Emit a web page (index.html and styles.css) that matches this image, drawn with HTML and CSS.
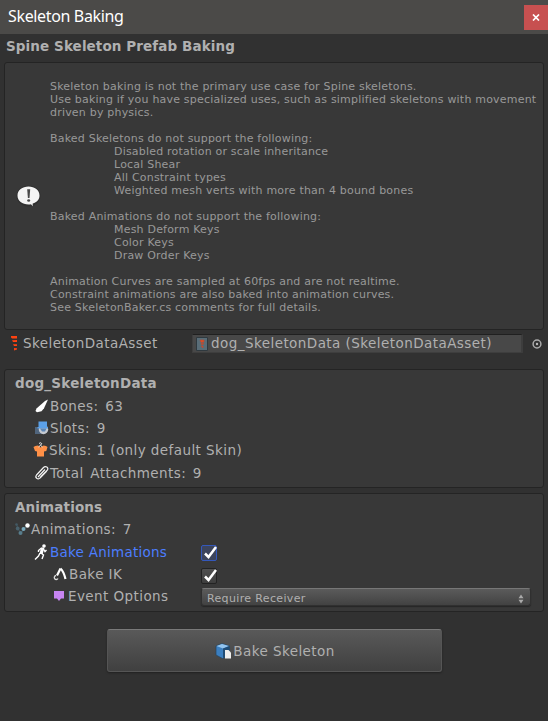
FILE: index.html
```html
<!DOCTYPE html>
<html lang="en">
<head>
<meta charset="utf-8">
<title>Skeleton Baking</title>
<link rel="stylesheet" href="styles.css">
</head>
<body>
<header class="titlebar">
  <span class="title">Skeleton Baking</span>
  <button class="close" aria-label="Close"><svg width="8" height="7" viewBox="0 0 8 7"><path d="M1 .5l6 6M7 .5l-6 6" stroke="#fff" stroke-width="1.700"/></svg></button>
</header>
<main>
  <h1 class="bold heading">Spine Skeleton Prefab Baking</h1>
  <section class="box help">
    <svg class="info" width="26" height="24" viewBox="0 0 26 24"><ellipse cx="12.500" cy="12" rx="12" ry="10.500" fill="#303030"/><path d="M12.500 2.500C6.300 2.500 1.500 6.200 1.500 11.500s4.800 9 11 9q1.500 0 2.500-.3l1.700 2V19.500C21 18.300 23.500 15.500 23.500 11.500 23.500 6.200 18.700 2.500 12.500 2.500z" fill="#f4f4f4"/><path d="M11.200 5.300h3l-.7 8.700h-1.600z" fill="#484848"/><ellipse cx="12.700" cy="16.500" rx="1.500" ry="1.300" fill="#484848"/></svg>
    <pre class="notes">Skeleton baking is not the primary use case for Spine skeletons.
Use baking if you have specialized uses, such as simplified skeletons with movement
driven by physics.

Baked Skeletons do not support the following:
<span class="tab"></span>Disabled rotation or scale inheritance
<span class="tab"></span>Local Shear
<span class="tab"></span>All Constraint types
<span class="tab"></span>Weighted mesh verts with more than 4 bound bones

Baked Animations do not support the following:
<span class="tab"></span>Mesh Deform Keys
<span class="tab"></span>Color Keys
<span class="tab"></span>Draw Order Keys

Animation Curves are sampled at 60fps and are not realtime.
Constraint animations are also baked into animation curves.
See SkeletonBaker.cs comments for full details.</pre>
  </section>
  <div class="asset">
    <svg class="spine" width="8" height="15" viewBox="0 0 8 15"><path d="M1 0h6v2.500H2L1 1.500zM2 4.300l5-.3v2H3zM3 8.300h4V10H4zM4 12l3 .3v1.200L4 14.500z" fill="#ff4210"/></svg>
    <span class="asset-label">SkeletonDataAsset</span>
    <div class="field"><svg width="12" height="14" viewBox="0 0 12 14"><path d="M.5.5h11v13H.5z" fill="#596d78" stroke="#2f393f"/><path d="M4 3h4v2l-3 .5zM5 6.500h3l-2 1.500zM5 9h2v2z" fill="#dc4d29" stroke="#b9492f" stroke-width=".6"/></svg><span>dog_SkeletonData (SkeletonDataAsset)</span></div>
    <svg class="picker" width="10" height="10" viewBox="0 0 10 10"><circle cx="5" cy="5" r="3.900" fill="none" stroke="#aaa" stroke-width="1.500"/><circle cx="5" cy="5" r="1.200" fill="#bbb"/></svg>
  </div>
  <section class="box data">
    <h2 class="bold">dog_SkeletonData</h2>
    <div class="row stat"><svg class="icon" width="16" height="16" viewBox="0 0 16 16"><path d="M14 1.500L11 3 2.500 10.500 1.500 13l1.500 1.300 4.500-1 2.500-3z" fill="#fff"/></svg><span>Bones: 63</span></div>
    <div class="row stat"><svg class="icon" width="16" height="16" viewBox="0 0 16 16"><path d="M1 7h8v7H1z" fill="#50657d"/><circle cx="9.500" cy="9.500" r="4.700" fill="#c5c9cf"/><path d="M4.500 1.500h8.500V7h1v1.500H3.500V7h1z" fill="#5ba0e8"/><path d="M6 8.500l2 3h3l1.500-3" fill="#5d86b5"/></svg><span>Slots: 9</span></div>
    <div class="row skins"><svg class="icon" width="16" height="16" viewBox="0 0 16 16"><path d="M.5 5Q2 3.500 5 3.500l2.500 2 3-2q3 0 4 1.500l-1.200 4-2.300.5v5h-7v-5L2 9z" fill="#ff9047"/><path d="M6 1.500Q7.500 0 8.700 1.500L7.500 3.300 9.500 5M5.500 5l2-1.700" fill="none" stroke="#eee"/></svg><span>Skins: 1 (only default Skin)</span></div>
    <div class="row stat"><svg class="icon" width="16" height="16" viewBox="0 0 16 16"><path d="M4 12L11 4.500M12.800 6L6 13C4 15.500 .5 12.500 2.500 10L9.500 2.500C11.500 .5 15 2.500 13.500 5L6.500 12" fill="none" stroke="#f4f4f4" stroke-width="1.200"/></svg><span>Total Attachments: 9</span></div>
  </section>
  <section class="box anims">
    <h2 class="bold">Animations</h2>
    <div class="row stat level0"><svg class="icon" width="16" height="14" viewBox="0 0 16 14"><path d="M1.500 2l1.500 5 3 4 3-4 3.500-4" fill="none" stroke="#405964"/><circle cx="1.500" cy="2.500" r="1.300" fill="#435964"/><circle cx="2.700" cy="6.500" r="1.900" fill="#49616c"/><circle cx="5.500" cy="11" r="2" fill="#587d8c"/><circle cx="8.500" cy="7" r="2" fill="#7aaabd"/><circle cx="12.500" cy="3.500" r="2.200" fill="#fff"/></svg><span>Animations: 7</span></div>
    <div class="row"><svg class="icon" width="16" height="18" viewBox="0 0 16 18"><circle cx="10" cy="3" r="1.800" fill="#fff"/><path d="M7.500 5L4.500 7.500V9M9.500 6l1.500 2.500 1.500-1.500M7 10l2.500 2-1.500 4M6 10l-1.500 3L1 16.500" fill="none" stroke="#fff" stroke-width="1.400"/><path d="M7 4.500h3.500L8.700 11H5.500z" fill="#fff"/></svg><span class="selected">Bake Animations</span><i class="check focus"><svg width="17" height="17" viewBox="0 0 17 17"><path d="M4 8.500L7.500 12 15 2" fill="none" stroke="#fff" stroke-width="2.500"/></svg></i></div>
    <div class="row level2"><svg class="icon" width="16" height="14" viewBox="0 0 16 14"><path d="M7.500 1.500L4 8.500M7.500 1.500Q10.500 4 12.500 12" fill="none" stroke="#fff" stroke-width="2.200"/><path d="M3 8.500a2 2 0 1 0 2 3" fill="none" stroke="#ddd" stroke-width="1.300"/></svg><span>Bake IK</span><i class="check"><svg width="17" height="17" viewBox="0 0 17 17"><path d="M4 8.500L7.500 12 15 2" fill="none" stroke="#fff" stroke-width="2.500"/></svg></i></div>
    <div class="row level2 event"><svg class="icon" width="16" height="14" viewBox="0 0 16 14"><path d="M2 2h10v7.500H9L7 12 5 9.500H2z" fill="#c785f2"/></svg><span>Event Options</span><div class="select"><span>Require Receiver</span><svg width="6" height="10" viewBox="0 0 6 10"><path d="M.5 4.300L3 .5l2.500 3.800zM.5 5.700L3 9.500l2.500-3.800z" fill="#aaa"/></svg></div></div>
  </section>
  <button class="bake"><svg width="18" height="18" viewBox="0 0 18 18"><path d="M2 4l6-2.500L15.500 4v9L8.500 16.500 2 13z" fill="#3b7fc0" stroke="#26435c" stroke-width=".7"/><path d="M2.500 4L8 2l7 2-6 2.500z" fill="#93c4ee"/><path d="M9 6.500L15.500 4v9L9 16z" fill="#204c75"/><path d="M11 8h3.500l2.500 2.500v6h-6z" fill="#eee"/></svg><span>Bake Skeleton</span></button>
</main>
</body>
</html>
```
FILE: styles.css
```css
* { box-sizing: border-box; }
body {
  margin: 0;
  height: 721px;
  overflow: hidden;
  background: #313131;
  color: #b0b0b0;
  font: 13.5px/22px "DejaVu Sans", Verdana, sans-serif;
  letter-spacing: 0.42px;
}
svg { display: block; flex: none; }
button { border: 0; padding: 0; font: inherit; color: inherit; letter-spacing: inherit; }
.titlebar {
  display: flex;
  justify-content: space-between;
  height: 34px;
  background: #4b4a48;
}
.title {
  padding-left: 8px;
  color: #fff;
  font: 16px/32px "Noto Sans", "Open Sans", sans-serif;
  letter-spacing: -0.35px;
}
.close {
  display: grid;
  place-items: center;
  width: 24px;
  height: 25px;
  margin-top: 5px;
  background: #c75050;
}
main { padding: 0 4px; }
.bold { margin: 0; font-size: 13.5px; font-weight: bold; letter-spacing: 0.14px; }
.data .bold { letter-spacing: 0.25px; }
.heading { height: 28px; padding-left: 2px; line-height: 24px; letter-spacing: 0.1px; }
.box {
  border: 1px solid #242424;
  border-radius: 3px;
  background: #383838;
}
.help { display: flex; height: 268px; padding: 17px 0 0 11px; }
.info { margin-top: 104px; }
.notes {
  margin: 0 0 0 8px;
  color: #989898;
  font: 11px/13px "DejaVu Sans", Verdana, sans-serif;
  letter-spacing: 0.2px;
}
.tab { display: inline-block; width: 64px; }
.asset { display: flex; height: 39px; padding: 4px 0 0 6px; line-height: 19px; }
.spine { margin-top: 2px; }
.asset-label { width: 168px; margin-left: 5px; }
.field {
  display: flex;
  align-items: center;
  width: 331px;
  height: 19px;
  margin-left: 1px;
  padding-left: 4px;
  border: 1px solid #3e3e3e;
  border-top-color: #202020;
  border-right: 2px solid #3d3d3d;
  background: #484848;
  letter-spacing: 0.44px;
}
.field svg { margin-left: -1px; }
.field span { margin-left: 3px; }
.picker { margin: 5px 0 0 9px; }
.data { height: 119px; margin-bottom: 5px; padding: 2px 10px; }
.anims { height: 119px; padding: 2px 10px; }
.row { display: flex; align-items: center; height: 22.4px; padding: 1px 0 0 19px; }
.stat { word-spacing: 2px; }
.skins { padding-left: 18px; }
.level0 { height: 22px; padding: 0; }
.level2 { padding-left: 38px; }
.event { padding-left: 37px; }
.selected { color: #4c7eff; letter-spacing: 0.25px; }
.check {
  width: 16px;
  height: 16px;
  margin: 3px 316px 0 auto;
  border: 1px solid #232323;
  border-radius: 2px;
  background: linear-gradient(#505050, #3e3e3e);
}
.check svg { margin: -1px; }
.focus { border-color: #3458bb; background: #3c445c; }
.select {
  display: flex;
  flex: none;
  align-items: center;
  justify-content: space-between;
  width: 330px;
  height: 18px;
  margin: 2px 2px 0 auto;
  padding: 3px 6px 0 5px;
  border: 1px solid #303030;
  border-top-color: #777;
  border-radius: 3px;
  background: linear-gradient(#5b5b5b, #424242);
  box-shadow: 0 1px 1px #262626;
  font-size: 11px;
  letter-spacing: 0.35px;
}
.bake {
  display: flex;
  align-items: center;
  justify-content: center;
  width: 335px;
  height: 43px;
  margin: 17px 0 0 103px;
  border: 1px solid #555;
  border-top-color: #797979;
  border-radius: 3px;
  background: linear-gradient(#595959, #404040);
  box-shadow: 0 1px 2px #202020;
}
.bake span { margin-left: 1px; }
```
